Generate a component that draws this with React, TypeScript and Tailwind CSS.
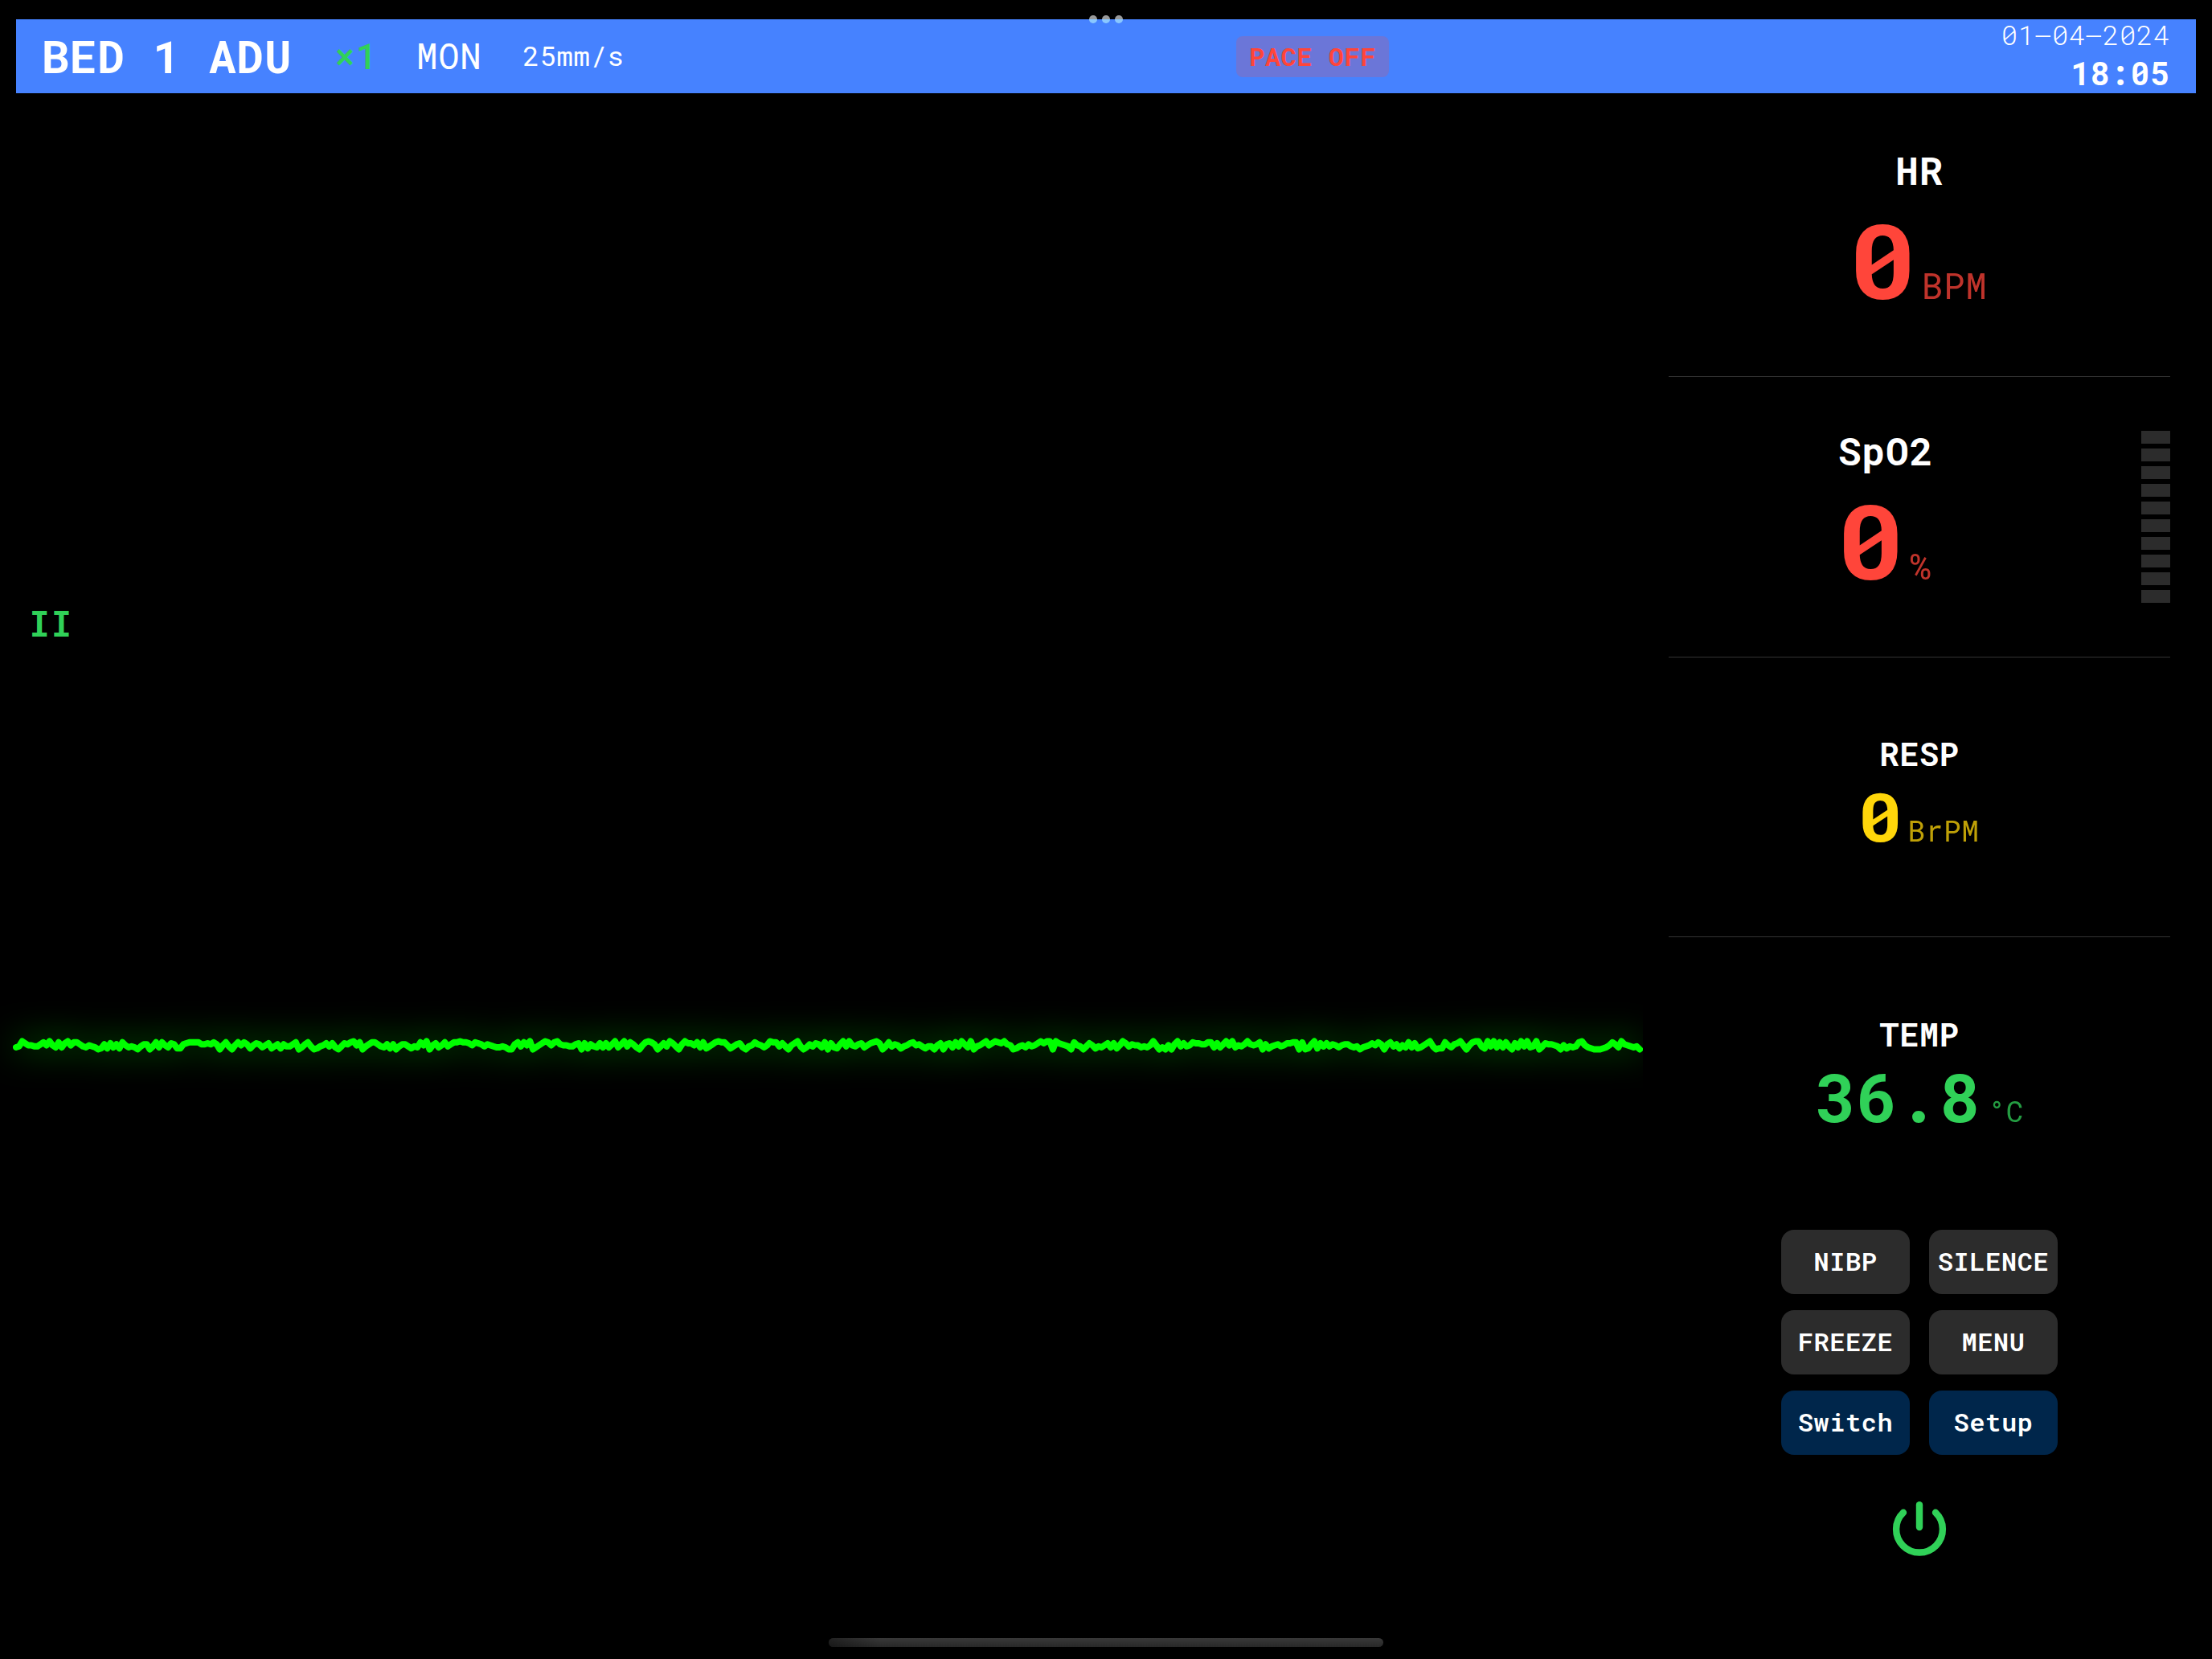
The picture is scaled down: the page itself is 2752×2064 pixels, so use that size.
import clsx from "clsx";

const SEGMENTS = Array.from({ length: 10 }, (_, index) => index);

// Lead II samples, 0 is the top of the noise band and 8 the bottom
const SAMPLES =
    "6502445531404616204113564568737263714656853385161462377321111332313" +
    "841584141374236427537355318631587542526852310418531135637385335756" +
    "140842641531101124123534566568831514086420141" +
    "0344553282735626263063051368410138525025830224161753101147532685413" +
    "46401152584205863523618267305045326421028515347542143575584283261503" +
    "608542042012034875463542020080234581458524756426274025344656404868483052" +
    "54122331162630406453034318375435422118187307252534643356586542413831" +
    "5374616276420587714632048410057050616158260506508523345847565104678" +
    "887641360345658";

const STEP = 2020 / (SAMPLES.length - 1);

const wave = SAMPLES.split("")
    .map((value, index) => {
        const x = (20 + index * STEP).toFixed(1);
        const y = (95.5 + Number(value) * 1.25).toFixed(1);
        return `${x},${y}`;
    })
    .join(" ");

const BUTTONS = [
    { label: "NIBP", color: "bg-[#2c2c2c]" },
    { label: "SILENCE", color: "bg-[#2c2c2c]" },
    { label: "FREEZE", color: "bg-[#2c2c2c]" },
    { label: "MENU", color: "bg-[#2c2c2c]" },
    { label: "Switch", color: "bg-[#00264b]" },
    { label: "Setup", color: "bg-[#00264b]" },
];

function Vital({
    label,
    value,
    unit,
    color,
    large,
}: {
    label: string;
    value: string;
    unit: string;
    color: string;
    large?: boolean;
}) {
    return (
        <div
            className={clsx(
                "flex flex-1 flex-col items-center",
                large ? "gap-[23px] pt-[68px]" : "gap-[15px] pt-[100px]",
            )}
        >
            <div
                className={clsx(
                    "font-bold",
                    large ? "text-[48px]/[48px]" : "text-[40px]/[40px]",
                )}
            >
                {label}
            </div>
            <div className={clsx("flex items-baseline gap-2", color)}>
                <span
                    className={clsx(
                        "font-bold",
                        large ? "text-[128px]/[128px]" : "text-[84px]/[84px]",
                        value === "0" && "scale-x-112",
                    )}
                >
                    {value}
                </span>
                <span
                    className={clsx(
                        "opacity-75",
                        large ? "text-[44px]/[44px]" : "text-[36px]/[36px]",
                    )}
                >
                    {unit}
                </span>
            </div>
        </div>
    );
}

export default function App() {
    return (
        <div className="relative flex h-[2064px] w-[2752px] flex-col overflow-hidden bg-black pt-6 font-['Roboto_Mono','DejaVu_Sans_Mono',monospace] whitespace-nowrap text-white [&_*]:tracking-[0.018em]">
            <header className="mx-5 flex h-[92px] shrink-0 justify-between bg-[#4682ff] px-8">
                <div className="flex w-[1486px] items-center pb-[3px] leading-none">
                    <span className="text-[56px] font-bold">BED 1 ADU</span>
                    <span className="ml-[52px] text-[44px] font-medium text-[#30d158]">
                        ×1
                    </span>
                    <span className="ml-[48px] text-[44px]">MON</span>
                    <span className="ml-[51px] text-[34px]">25mm/s</span>
                </div>
                <div className="mt-[21px] mr-auto flex h-[51px] w-[190px] items-center justify-center rounded-lg bg-[#ff453a]/20 pb-[2px] text-[32px] font-bold text-[#ff453a]">
                    PACE OFF
                </div>
                <div className="flex flex-col items-end gap-[11px] pt-[2px]">
                    <div className="text-[34px]/[34px] font-[350]">
                        01<span className="inline-block scale-x-150">-</span>04
                        <span className="inline-block scale-x-150">-</span>2024
                    </div>
                    <div className="text-[40px]/[40px] font-bold">18:05</div>
                </div>
            </header>
            <div className="absolute top-[19px] left-[1355px] flex gap-1.5">
                <i className="size-2.5 rounded-full bg-linear-to-b from-[#999999] from-50% to-[#8ac8ff] to-50%" />
                <i className="size-2.5 rounded-full bg-linear-to-b from-[#999999] from-50% to-[#8ac8ff] to-50%" />
                <i className="size-2.5 rounded-full bg-linear-to-b from-[#999999] from-50% to-[#8ac8ff] to-50%" />
            </div>
            <div className="flex flex-1">
                <main className="w-[2044px] pt-[637px]">
                    <div className="pl-9 text-[44px]/[44px] font-bold text-[#30d158]">
                        II
                    </div>
                    <svg
                        className="mt-[403px] block h-[200px] w-[2044px]"
                        viewBox="0 0 2044 200"
                    >
                        <polyline
                            className="drop-shadow-[0_0_20px_rgba(0,255,0,0.5)]"
                            points={wave}
                            fill="none"
                            stroke="#00ff00"
                            strokeWidth="8"
                            strokeLinecap="round"
                            strokeLinejoin="round"
                        />
                    </svg>
                </main>
                <aside className="ml-8 w-[624px] pt-1">
                    <section className="flex h-[349px] border-b border-[#333333]">
                        <Vital
                            label="HR"
                            value="0"
                            unit="BPM"
                            color="text-[#ff453a]"
                            large
                        />
                    </section>
                    <section className="flex h-[349px] gap-12 border-b border-[#333333]">
                        <Vital
                            label="SpO2"
                            value="0"
                            unit="%"
                            color="text-[#ff453a]"
                            large
                        />
                        <div className="flex flex-col gap-1.5 pt-[67px]">
                            {SEGMENTS.map((item) => (
                                <div
                                    key={item}
                                    className="h-4 w-9 bg-[#2c2c2c]"
                                />
                            ))}
                        </div>
                    </section>
                    <section className="flex h-[348px] border-b border-[#333333]">
                        <Vital
                            label="RESP"
                            value="0"
                            unit="BrPM"
                            color="text-[#ffd60a]"
                        />
                    </section>
                    <section className="flex h-[348px] pt-px">
                        <Vital
                            label="TEMP"
                            value="36.8"
                            unit="°C"
                            color="text-[#30d158]"
                        />
                    </section>
                    <div className="mx-auto mt-4 grid w-[344px] grid-cols-2 gap-x-6 gap-y-5">
                        {BUTTONS.map(({ label, color }) => (
                            <button
                                key={label}
                                className={clsx(
                                    "h-20 rounded-2xl pb-[2px] text-[32px]/[32px] font-semibold",
                                    color,
                                )}
                            >
                                {label}
                            </button>
                        ))}
                    </div>
                    <button className="mx-auto mt-[53px] block">
                        <svg
                            className="size-20"
                            viewBox="0 0 80 80"
                            fill="none"
                            stroke="#30d158"
                            strokeWidth="8.4"
                            strokeLinecap="round"
                        >
                            <path d="M40 9.3V37" />
                            <path d="M20 18.8A28.9 28.9 0 1 0 60 18.8" />
                        </svg>
                    </button>
                </aside>
            </div>
            <div className="absolute top-[2038px] left-[1031px] h-[11px] w-[690px] rounded-full bg-linear-to-b from-[#383838] to-[#282828]">
                <div className="h-full w-16 rounded-l-full bg-linear-to-r from-black/40 to-transparent" />
            </div>
        </div>
    );
}
